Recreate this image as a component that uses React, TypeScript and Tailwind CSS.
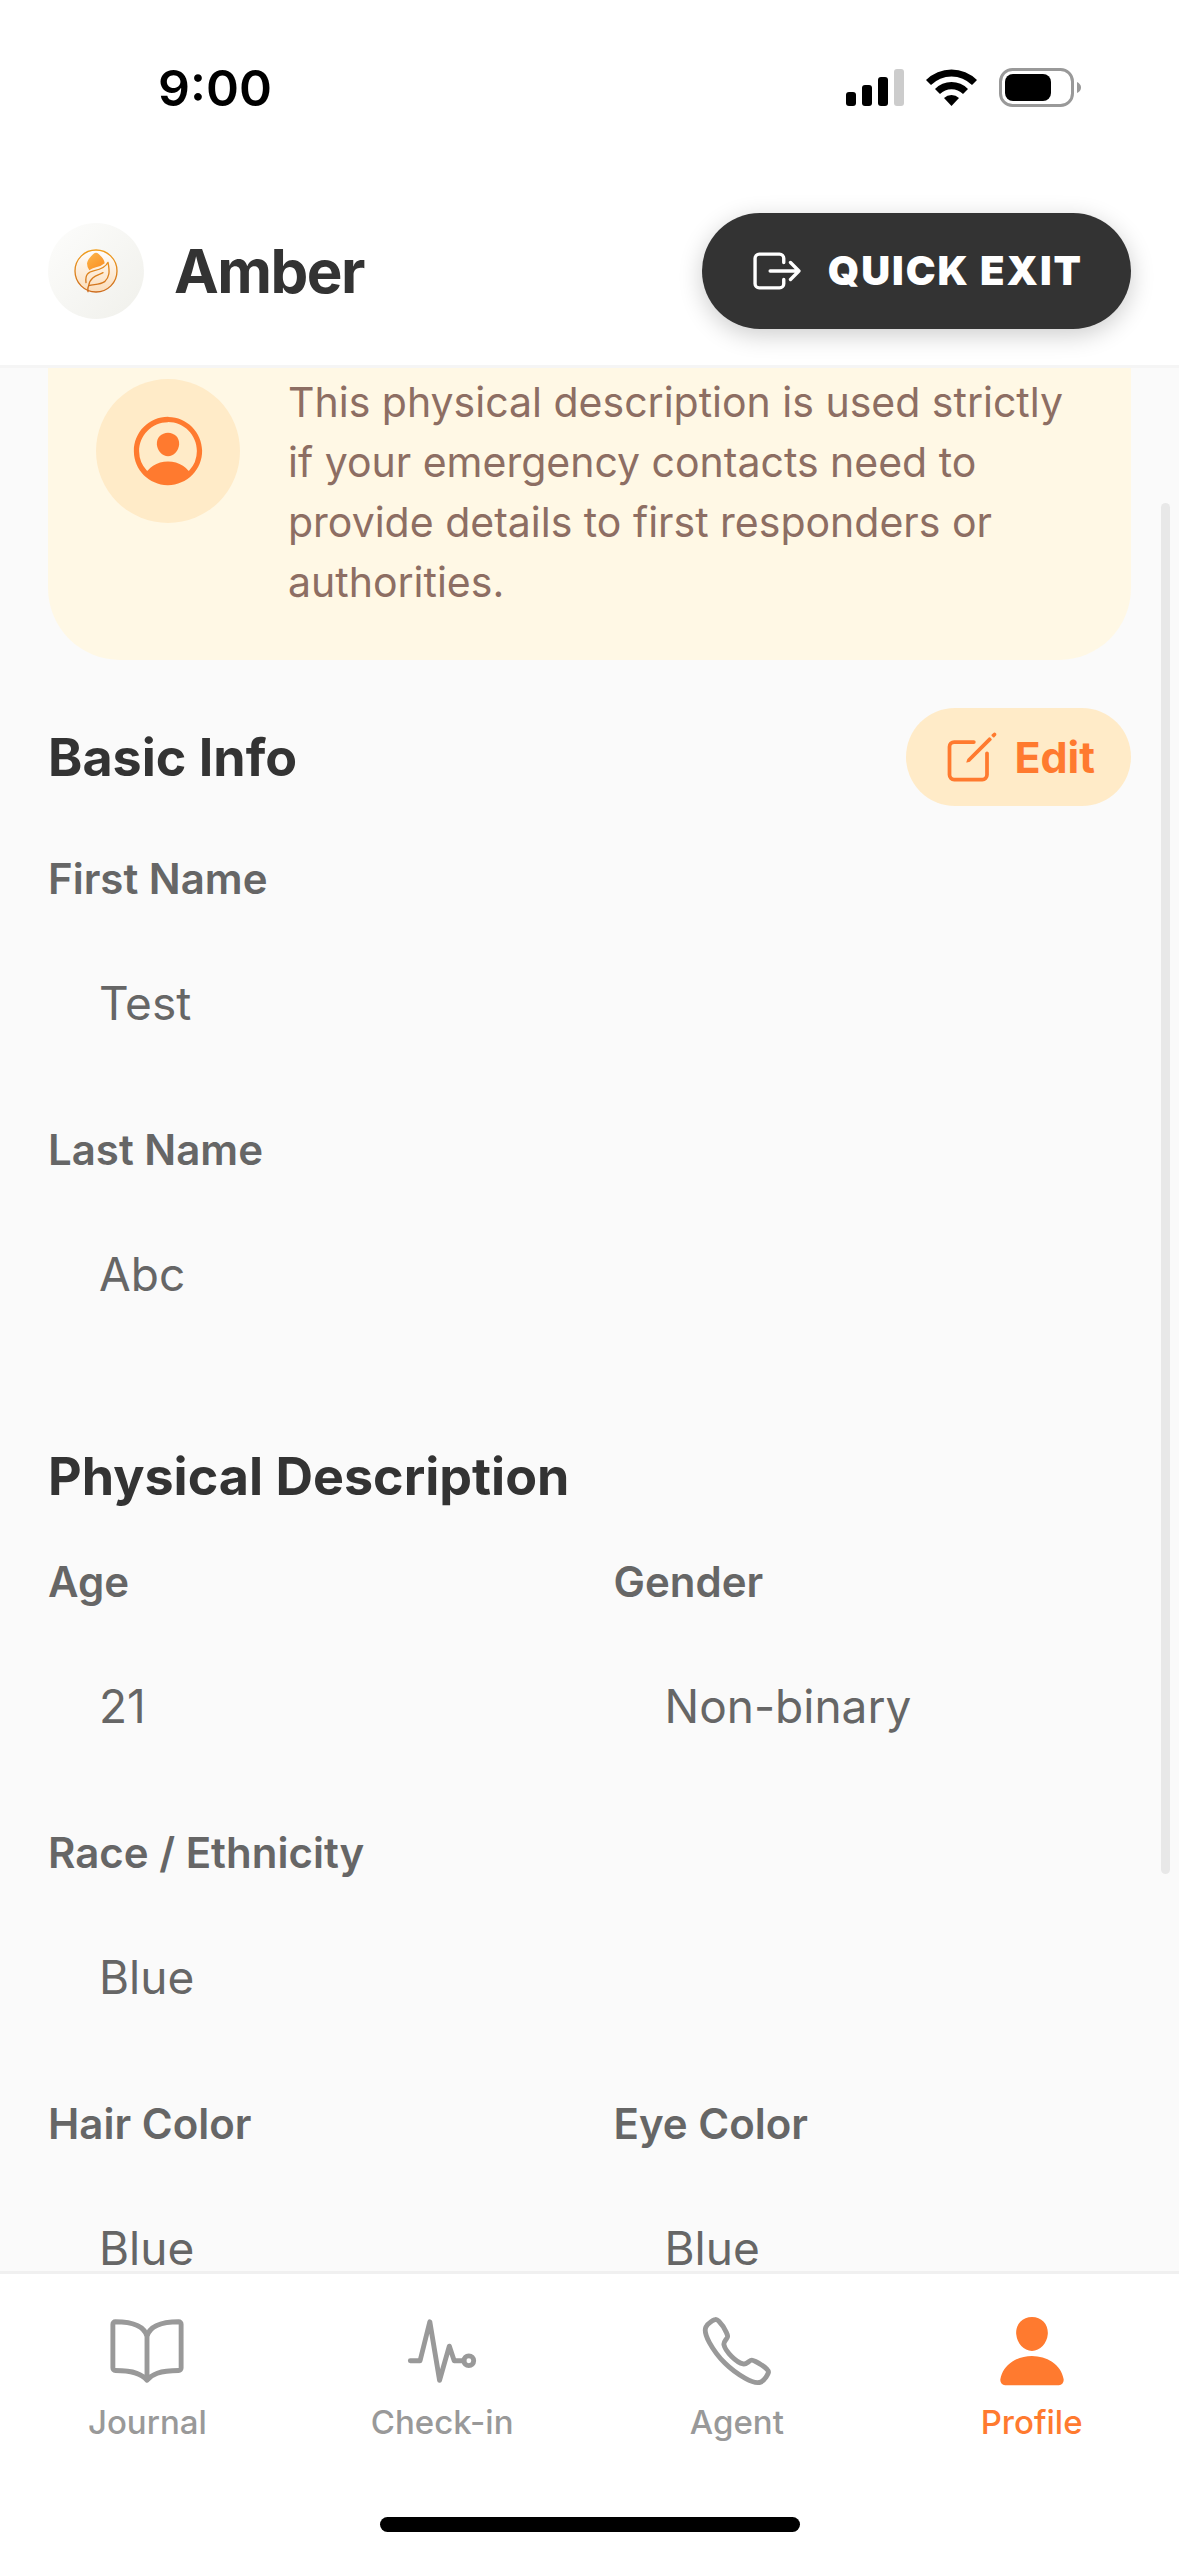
import { useId } from "react";
import type { IconType } from "react-icons";
import {
  IoBookOutline,
  IoCallOutline,
  IoCreateOutline,
  IoExitOutline,
  IoPerson,
  IoPersonCircleOutline,
  IoPulseOutline,
} from "react-icons/io5";

type FieldProps = {
  label: string;
  value: string;
};

type Tab = {
  name: string;
  icon: IconType;
  active?: boolean;
};

const tabs: Tab[] = [
  { name: "Journal", icon: IoBookOutline },
  { name: "Check-in", icon: IoPulseOutline },
  { name: "Agent", icon: IoCallOutline },
  { name: "Profile", icon: IoPerson, active: true },
];

function StatusBar() {
  return (
    <div className="flex h-[176px] items-center justify-between pr-[97px] pl-[158px]">
      <span className="text-[50px] leading-[60px] font-semibold text-black">9:00</span>
      <svg className="h-[40px] w-[236px]" viewBox="0 0 236 40" aria-hidden="true">
        <rect x="0" y="24" width="10" height="14" rx="3" />
        <rect x="16" y="17" width="10" height="21" rx="3" />
        <rect x="32" y="9" width="10" height="29" rx="3" />
        <rect x="48" y="1" width="10" height="37" rx="3" fill="#cccccc" />
        <path d="M80 12 a36 36 0 0 1 51 0 l-5 5 a29 29 0 0 0 -41 0 z" />
        <path d="M89 21 a23 23 0 0 1 33 0 l-5 5 a16.500 16.500 0 0 0 -23 0 z" />
        <path d="M98 30 a11 11 0 0 1 15 0 l-7.500 8 z" />
        <rect x="154.500" y="1.500" width="72" height="36" rx="12" fill="none" stroke="#999999" strokeWidth="3" />
        <rect x="159" y="6" width="46" height="27" rx="8" />
        <path d="M231 14 q4 2 4 5.500 t-4 5.500 z" fill="#999999" />
      </svg>
    </div>
  );
}

function Logo() {
  return (
    <div className="flex size-[96px] items-center justify-center rounded-full bg-linear-to-br from-[#fdfdfc] to-[#f0f0eb]">
      <svg className="size-[44px]" viewBox="132 117 132 132" fill="none" aria-hidden="true">
        <defs>
          <linearGradient id="amber-line" x1="0" y1="117" x2="0" y2="249" gradientUnits="userSpaceOnUse">
            <stop offset="0" stopColor="#f2a01f" />
            <stop offset="1" stopColor="#cc6a1c" />
          </linearGradient>
          <linearGradient id="amber-fill" x1="0" y1="117" x2="0" y2="249" gradientUnits="userSpaceOnUse">
            <stop offset="0" stopColor="#ffffff" />
            <stop offset="1" stopColor="#fbdcb8" />
          </linearGradient>
          <linearGradient id="amber-bud" x1="180" y1="130" x2="215" y2="180" gradientUnits="userSpaceOnUse">
            <stop offset="0" stopColor="#fbb34a" />
            <stop offset="1" stopColor="#fb8f22" />
          </linearGradient>
        </defs>
        <circle cx="198" cy="183" r="63" fill="url(#amber-fill)" stroke="url(#amber-line)" strokeWidth="4" />
        <path
          d="M190 132 Q198 125 206 132 Q224 148 224 160 Q212 170 198 172 Q186 175 178 181 Q171 172 171 160 Q173 147 190 132 Z"
          fill="url(#amber-bud)"
        />
        <g stroke="url(#amber-line)" strokeWidth="4" strokeLinecap="round" strokeLinejoin="round">
          <path d="M168 218 C165 194 174 186 193 182 C212 178 228 170 234 157 C240 186 238 202 224 215 C208 226 190 222 176 227" />
          <path d="M219 188 C206 196 180 198 176 227 C172 235 174 240 174 245" />
        </g>
      </svg>
    </div>
  );
}

function Field({ label, value }: FieldProps) {
  const id = useId();

  return (
    <div className="flex min-w-0 flex-col gap-6">
      <label htmlFor={id} className="text-[42px] leading-[50px] font-semibold text-[#666666]">
        {label}
      </label>
      <input
        id={id}
        value={value}
        readOnly
        className="h-[149px] w-full rounded-[36px] border-3 border-transparent bg-transparent px-[48px] text-[46px] text-[#666666] outline-none"
      />
    </div>
  );
}

export default function App() {
  return (
    <div className="flex h-screen flex-col bg-[#fafafa] font-['Inter','Liberation_Sans',sans-serif]">
      <header className="shrink-0 border-b-3 border-[#f5f5f5] bg-white">
        <StatusBar />
        <div className="flex items-center justify-between px-[48px] pt-[37px] pb-[36px]">
          <div className="flex items-center gap-[30px]">
            <Logo />
            <h1 className="text-[60px] leading-[72px] font-bold tracking-tight text-[#333333]">Amber</h1>
          </div>
          <button
            type="button"
            className="flex h-[116px] items-center gap-6 rounded-full bg-[#333333] px-[48px] text-[40px] font-black tracking-wider text-white shadow-[0_6px_24px_rgba(0,0,0,0.2)]"
          >
            <IoExitOutline className="size-[54px]" />
            QUICK EXIT
          </button>
        </div>
      </header>

      <div className="relative min-h-0 flex-1">
        <main className="h-full overflow-y-auto px-[48px] pb-[48px] [scrollbar-width:none]">
          <section className="flex gap-12 rounded-b-[72px] bg-[#fff8e5] px-12 pt-1 pb-12">
            <div className="mt-[7px] flex size-[144px] shrink-0 items-center justify-center rounded-full bg-[#ffebc8] text-[#ff7a2f]">
              <IoPersonCircleOutline className="size-[84px]" />
            </div>
            <p className="text-[41px] leading-[60px] text-[#8d6e63]">
              This physical description is used strictly if your emergency contacts need to provide details to first
              responders or authorities.
            </p>
          </section>

          <section className="mt-12 flex flex-col gap-12">
            <div className="flex items-center justify-between">
              <h2 className="text-[52px] leading-[65px] font-bold text-[#333333]">Basic Info</h2>
              <button
                type="button"
                className="flex h-[98px] items-center gap-3 rounded-full bg-[#ffebc8] px-9 text-[43px] font-bold text-[#ff7a2f]"
              >
                <IoCreateOutline className="size-[60px]" />
                Edit
              </button>
            </div>
            <Field label="First Name" value="Test" />
            <Field label="Last Name" value="Abc" />
          </section>

          <section className="mt-24 flex flex-col gap-12">
            <h2 className="text-[52px] leading-[65px] font-bold text-[#333333]">Physical Description</h2>
            <div className="grid grid-cols-2 gap-12">
              <Field label="Age" value="21" />
              <Field label="Gender" value="Non-binary" />
            </div>
            <Field label="Race / Ethnicity" value="Blue" />
            <div className="grid grid-cols-2 gap-12">
              <Field label="Hair Color" value="Blue" />
              <Field label="Eye Color" value="Blue" />
            </div>
          </section>
        </main>
        {/* scroll indicator */}
        <div className="absolute top-[135px] right-[9px] h-[1371px] w-[9px] rounded-full bg-[#e8e8e8]" />
      </div>

      <footer className="shrink-0 border-t-3 border-[#f0f0f0] bg-white pt-[38px] pb-6">
        <nav className="grid grid-cols-4">
          {tabs.map(({ name, icon: Icon, active }) => (
            <a
              key={name}
              href={`#${name.toLowerCase()}`}
              className={`flex flex-col items-center gap-3 text-[33px] leading-[40px] font-medium ${active ? "text-[#ff7a2f]" : "text-[#999999]"}`}
            >
              <Icon className="size-[78px]" />
              {name}
            </a>
          ))}
        </nav>
        <div className="mx-auto mt-[75px] h-[15px] w-[420px] rounded-full bg-black" />
      </footer>
    </div>
  );
}
